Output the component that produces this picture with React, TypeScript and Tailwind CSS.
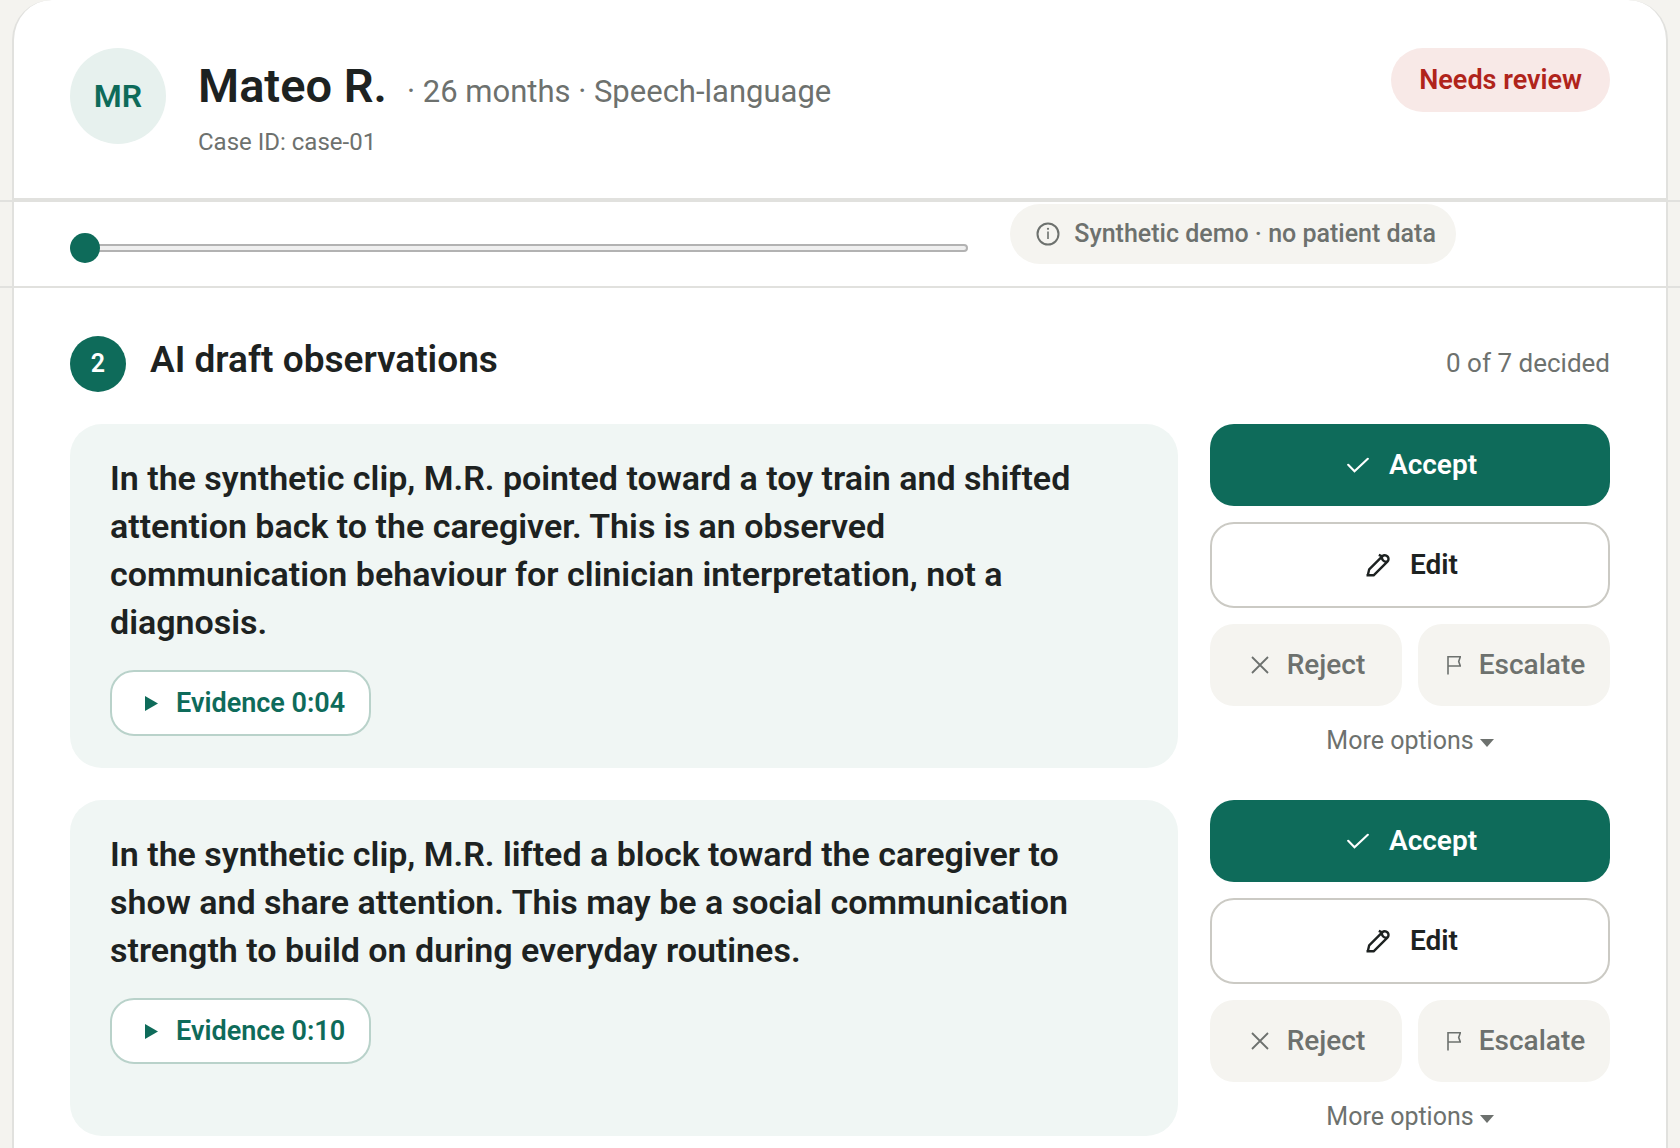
import React from "react";

type Observation = { id: string; text: string; time: string };

const observations: Observation[] = [
  {
    id: "pointing",
    text: "In the synthetic clip, M.R. pointed toward a toy train and shifted attention back to the caregiver. This is an observed communication behaviour for clinician interpretation, not a diagnosis.",
    time: "0:04",
  },
  {
    id: "sharing",
    text: "In the synthetic clip, M.R. lifted a block toward the caregiver to show and share attention. This may be a social communication strength to build on during everyday routines.",
    time: "0:10",
  },
];

function InfoIcon() {
  return (
    <svg className="size-6" viewBox="0 0 24 24" fill="none" stroke="currentColor" strokeWidth="2" aria-hidden="true">
      <circle cx="12" cy="12" r="10.5" />
      <path d="M12 9.500v7.500" strokeWidth="1.6" />
      <circle cx="12" cy="6.8" r="1.1" fill="currentColor" stroke="none" />
    </svg>
  );
}

function CheckIcon() {
  return (
    <svg className="h-6 w-[22px]" viewBox="0 0 22 24" fill="none" stroke="currentColor" strokeWidth="2.1" strokeLinecap="round" aria-hidden="true">
      <path d="M1.200 11.800l6.300 6.500L20.800 5.800" />
    </svg>
  );
}

function PencilIcon() {
  return (
    <svg className="size-6" viewBox="0 0 24 24" fill="none" stroke="currentColor" strokeWidth="2.4" aria-hidden="true">
      <path d="M.5 22.300H7.600L21.400 8.600A3.700 3.700 0 0 0 16.200 3.300L3.200 16.300 1.800 22.300" strokeLinejoin="round" />
      <path d="M12.800 1.800l3.400 1.500M16 3.200c-.8 3 1.600 5.800 5 5.600" />
    </svg>
  );
}

function CrossIcon() {
  return (
    <svg className="size-[18px]" viewBox="0 0 18 18" fill="none" stroke="currentColor" strokeWidth="1.8" aria-hidden="true">
      <path d="M1 1l16 16M17 1L1 17" />
    </svg>
  );
}

function FlagIcon() {
  return (
    <svg className="h-[20px] w-[14px]" viewBox="0 0 14 20" fill="none" stroke="currentColor" strokeWidth="1.6" aria-hidden="true">
      <path d="M1 19.500V1.800h12.300l-1.600 4.600 1.600 4.600H1" />
    </svg>
  );
}

function PlayIcon() {
  return (
    <svg className="h-[15px] w-[13px]" viewBox="0 0 13 15" fill="currentColor" aria-hidden="true">
      <path d="M0 0l13 7.500L0 15z" />
    </svg>
  );
}

function CaretIcon() {
  return (
    <svg className="mt-1 h-2 w-[14px]" viewBox="0 0 14 8" fill="currentColor" aria-hidden="true">
      <path d="M0 0h14L7 8z" />
    </svg>
  );
}

function ObservationRow({ item }: { item: Observation }) {
  return (
    <li className="grid grid-cols-[minmax(0,1fr)_400px] gap-8">
      <article className="rounded-[32px] bg-[#f0f6f4] pt-[30px] pr-16 pb-8 pl-10">
        <p className="text-[34px] leading-[48px] font-semibold">{item.text}</p>
        <button
          type="button"
          className="mt-6 flex h-[66px] items-center gap-[18px] rounded-3xl border-2 border-[#b9d2ca] bg-white pr-6 pl-[33px] text-[27px] font-semibold text-[#0e6b5a]"
        >
          <PlayIcon />
          Evidence {item.time}
        </button>
      </article>
      <div className="flex flex-col gap-4">
        <button
          type="button"
          className="flex h-[82px] items-center justify-center gap-5 rounded-3xl bg-[#0e6b5a] pl-1 text-[28px] font-semibold text-white"
        >
          <CheckIcon />
          Accept
        </button>
        <button
          type="button"
          className="flex h-[86px] items-center justify-center gap-5 rounded-3xl border-2 border-[#cbcac4] bg-white pl-1 text-[28px] font-semibold"
        >
          <PencilIcon />
          Edit
        </button>
        <div className="grid grid-cols-2 gap-4 text-[28px] font-medium text-[#6d716e]">
          <button type="button" className="flex h-[82px] items-center justify-center gap-[18px] rounded-3xl bg-[#f5f4f0] pl-1">
            <CrossIcon />
            Reject
          </button>
          <button type="button" className="flex h-[82px] items-center justify-center gap-[18px] rounded-3xl bg-[#f5f4f0] pl-1">
            <FlagIcon />
            Escalate
          </button>
        </div>
        <button type="button" className="flex h-[38px] items-center justify-center gap-[6px] text-[25px] text-[#6d716e]">
          More options
          <CaretIcon />
        </button>
      </div>
    </li>
  );
}

export default function App() {
  return (
    <div className="flex min-h-screen flex-col bg-[#f4f3ef] font-['Roboto',sans-serif] text-[#1d2221]">
      <header className="mx-3 flex items-start gap-8 rounded-t-[40px] border-x-2 border-b-2 border-[#e1e1de] bg-white px-14 pt-12 pb-10">
        <div className="flex size-24 items-center justify-center rounded-full bg-[#e7f1ee] text-[32px] font-semibold text-[#0e6b5a]">
          MR
        </div>
        <div className="flex-1 pt-[10px]">
          <div className="flex items-baseline gap-5">
            <h1 className="text-[47px] leading-[56px] font-semibold">Mateo R.</h1>
            <p className="text-[31px] leading-[40px] text-[#6d716e]">· 26 months · Speech-language</p>
          </div>
          <p className="mt-3 text-[24px] leading-8 text-[#6d716e]">Case ID: case-01</p>
        </div>
        <span className="flex h-16 items-center rounded-full bg-[#f8e9e7] px-7 text-[27px] font-semibold text-[#b0241b]">
          Needs review
        </span>
      </header>

      <div className="border-y-2 border-[#e1e1de]">
        <div className="mx-3 flex items-start border-x-2 border-[#e1e1de] bg-white px-14 pt-[2px] pb-[22px]">
          <input
            type="range"
            aria-label="Clip position"
            min={0}
            max={100}
            defaultValue={0}
            className="mb-px h-[30px] w-7/12 appearance-none self-end bg-transparent [&::-webkit-slider-runnable-track]:h-2 [&::-webkit-slider-runnable-track]:rounded [&::-webkit-slider-runnable-track]:border-2 [&::-webkit-slider-runnable-track]:border-[#b2b2b2] [&::-webkit-slider-runnable-track]:bg-[#efefef] [&::-webkit-slider-thumb]:-mt-[13px] [&::-webkit-slider-thumb]:-ml-[2px] [&::-webkit-slider-thumb]:size-[30px] [&::-webkit-slider-thumb]:appearance-none [&::-webkit-slider-thumb]:rounded-full [&::-webkit-slider-thumb]:bg-[#0e6b5a]"
          />
          <p className="ml-[42px] flex h-[60px] items-center gap-[14px] rounded-full bg-[#f5f4f0] pr-[20px] pl-[26px] text-[25px] font-medium text-[#6d716e]">
            <InfoIcon />
            Synthetic demo · no patient data
          </p>
        </div>
      </div>

      <main className="mx-3 flex-1 border-x-2 border-[#e1e1de] bg-white px-14 pt-12 pb-3">
        <div className="mb-8 flex items-start gap-6">
          <span className="flex size-14 items-center justify-center rounded-full bg-[#0e6b5a] text-[25px] font-semibold text-white">
            2
          </span>
          <h2 className="flex-1 text-[37px] leading-[48px] font-semibold">AI draft observations</h2>
          <p className="text-[26px] leading-[54px] text-[#6d716e]">0 of 7 decided</p>
        </div>
        <ul className="flex flex-col gap-8">
          {observations.map((item) => (
            <ObservationRow key={item.id} item={item} />
          ))}
        </ul>
      </main>
    </div>
  );
}
